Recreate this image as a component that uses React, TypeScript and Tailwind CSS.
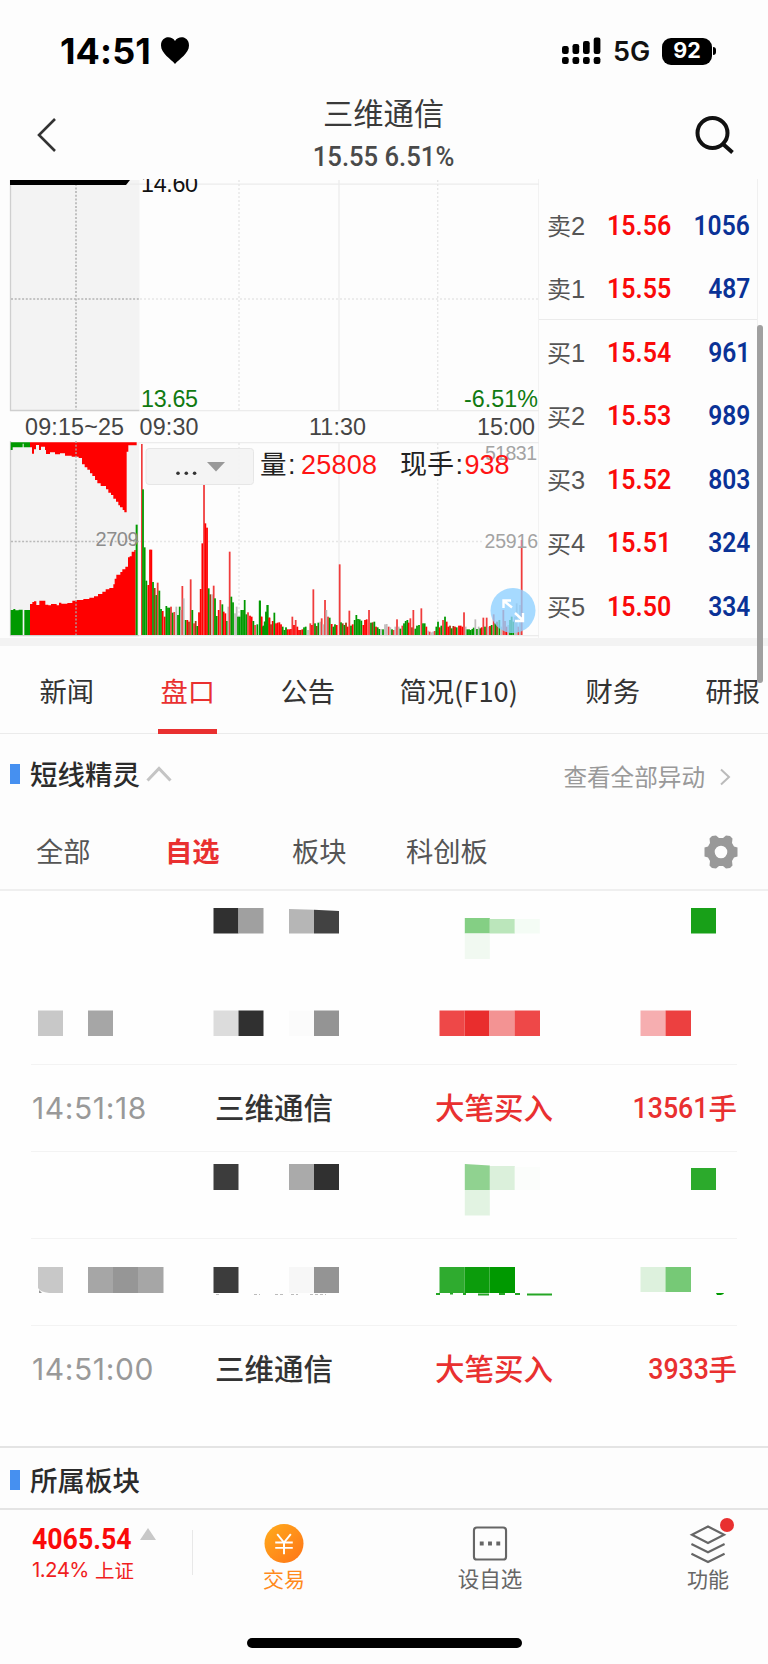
import React from "react";

const orderBook = [
    { label: "卖2", price: "15.56", volume: "1056" },
    { label: "卖1", price: "15.55", volume: "487" },
    { label: "买1", price: "15.54", volume: "961" },
    { label: "买2", price: "15.53", volume: "989" },
    { label: "买3", price: "15.52", volume: "803" },
    { label: "买4", price: "15.51", volume: "324" },
    { label: "买5", price: "15.50", volume: "334" },
];

const tabs = [
    { label: "新闻", width: "w-[121px]" },
    { label: "盘口", width: "w-[120px]" },
    { label: "公告", width: "w-[119px]" },
    { label: "简况(F10)", width: "w-[186px]" },
    { label: "财务", width: "w-[120px]" },
    { label: "研报", width: "w-[62px]" },
];

const filters = [
    { label: "全部", width: "w-[129px]" },
    { label: "自选", width: "w-[127px]" },
    { label: "板块", width: "w-[114px]" },
    { label: "科创板", width: "w-[298px]" },
];

const barColors: Record<string, string> = { r: "#ff0000", g: "#009900", m: "#a03c10", s: "#f03c3c", y: "#c0bcbc" };

// x, top and colour of each bar, in thirds of a pixel; base line is 615
const morningBars =
    "429 178 g,434 352 g,439 452 g,445 465 r,450 359 r,454 359 r,459 456 g,464 474 m,469 495 g,473 458 s,478 482 g,483 537 g,488 543 r,494 560 r,499 528 g,504 533 g,509 533 g,513 530 s,518 548 g,523 546 s,529 530 y,534 555 g,539 530 g,543 540 y,547 468 s,551 505 y,557 570 g,562 570 r,567 575 m,572 448 s,577 540 g,582 580 s,587 573 m,592 588 g,597 547 r,602 477 r,607 340 r,612 165 s,616 280 r,621 293 r,626 475 g,631 493 m,636 493 y,641 467 s,645 505 g,650 558 g,656 540 r,661 510 s,667 523 g,671 545 r,676 550 r,681 573 g,685 530 y,689 365 s,694 500 g,699 517 g,705 550 y,710 530 y,714 560 g,719 560 g,724 540 g,729 540 g,734 510 g,739 553 g,744 547 s,750 557 r,755 560 r,760 573 g,765 585 s,772 583 g,779 512 g,783 560 s,788 590 g,795 575 g,798 545 g,802 525 g,808 563 r";
const afternoonBars =
    "0 512 g,5 560 r,10 587 g,14 575 g,19 548 g,23 525 g,28 563 r,33 583 m,38 573 r,43 548 g,48 580 r,53 578 r,58 577 r,63 583 r,68 590 g,73 600 g,78 592 g,83 598 r,88 598 r,93 597 r,97 560 s,102 585 r,107 570 s,112 590 r,117 600 r,122 600 m,127 598 r,132 592 g,137 590 g,144 600 y,151 580 s,156 585 r,160 478 s,165 580 g,170 588 m,175 578 g,181 575 y,185 565 s,190 583 y,195 510 s,199 540 y,204 560 s,209 563 g,215 582 r,220 590 g,225 583 g,230 585 r,239 403 s,243 577 g,248 580 m,253 585 g,258 578 m,263 590 r,268 542 s,273 587 g,278 583 r,284 570 g,289 555 g,294 567 g,299 568 g,304 572 g,310 585 r,315 570 r,320 568 r,327 540 s,333 578 g,338 577 m,343 575 g,348 590 r,353 592 g,358 597 g,363 597 y,369 598 g,375 583 y,380 582 y,386 590 s,391 592 y,396 598 g,401 600 s,406 590 y,411 568 s,416 590 y,421 596 g,427 587 s,432 580 g,437 573 g,442 570 g,446 578 r,451 565 s,456 592 m,460 540 s,466 596 g,471 587 g,477 585 g,484 535 s,489 580 g,494 580 g,499 590 r,504 602 y,509 605 s,514 607 y,519 605 y,524 603 s,529 590 g,534 575 g,539 592 r,544 587 g,549 570 s,555 560 g,560 575 r,565 590 r,570 587 m,575 595 g,580 588 m,585 590 r,590 592 g,597 587 r,602 587 r,607 590 r,612 547 s,617 590 y,622 598 g,627 598 g,632 600 g,637 597 g,641 593 g,646 568 y,651 597 g,656 590 y,661 595 g,665 592 r,670 563 s,675 590 g,680 563 s,685 590 y,690 588 r,695 585 g,701 553 s,706 580 g,711 575 m,718 570 g,724 590 y,730 540 s,735 573 s,740 590 r,745 585 y,750 570 g,755 560 g,760 575 g,765 560 y,770 520 y,775 590 s,780 525 y,785 330 s";

function Bars({ data }: { data: string }) {
    return (
        <>
            {data.split(",").map((bar, i) => {
                const [x, top, color] = bar.split(" ");
                return <rect key={i} x={Number(x) - 2.6} y={top} width="5.3" height={615 - Number(top)} fill={barColors[color]} />;
            })}
        </>
    );
}

function Chart() {
    return (
        <svg className="block shrink-0" width="539" height="459" viewBox="0 179 539 459" fontFamily="'Liberation Sans', 'Noto Sans CJK SC', sans-serif">
            {/* price pane */}
            <rect x="10" y="180" width="129.5" height="230.5" fill="#f3f3f3" />
            <path d="M10.5 180V410.5H139.5" fill="none" stroke="#cfcfcf" strokeWidth="1.3" />
            <path d="M130 184.2H539M139.5 410.7H539M339 180V410M539 179V638" stroke="#ececec" strokeWidth="1.2" />
            <path d="M239 180V410M437.7 180V410M140 299H538" stroke="#e6e6e6" strokeWidth="1.4" strokeDasharray="2 2" />
            <path d="M76 180V410M11 299H139" stroke="#b4b4b4" strokeWidth="1.6" strokeDasharray="2 1.7" />
            <path d="M10 180H130L126 185H10Z" fill="#000" />
            <text x="141" y="192.3" fontSize="23.3" fill="#111" textLength="57">14.60</text>
            <text x="141" y="407.3" fontSize="23.3" fill="#107a10" textLength="57">13.65</text>
            <text x="464" y="407.3" fontSize="23.3" fill="#107a10" textLength="74">-6.51%</text>
            <g fontSize="23.3" fill="#444">
                <text x="25" y="435" textLength="99">09:15~25</text>
                <text x="139.5" y="435" textLength="59">09:30</text>
                <text x="309" y="435" textLength="57">11:30</text>
                <text x="477" y="435" textLength="58">15:00</text>
            </g>

            {/* volume pane */}
            <rect x="10" y="442" width="129" height="194" fill="#f3f3f3" />
            <path d="M10.5 441V635.7H139" fill="none" stroke="#cfcfcf" strokeWidth="1.3" />
            <path d="M139 442.7H539M139 635.7H539M339 443V635" stroke="#ececec" strokeWidth="1.2" />
            <path d="M239 443V635M437.7 443V635M140 541.5H484" stroke="#e6e6e6" strokeWidth="1.4" strokeDasharray="2 2" />
            <g transform="translate(0 430) scale(0.33333)">
                <path d="M32 37H90V52H71V41H68V52H38V60H32Z" fill="#009900" />
                <path d="M90 37H410V46H385V65H380V247H373V240H368V232H360V226H355V215H348V206H340V195H333V188H325V178H318V168H302V160H292V150H285V138H277V130H270V119H262V112H254V103H246V84H236V80H215V77H195V70H180V73H165V67H150V72H138V60H135V50H123V60H117V45H108V58H102V71H96V52H90Z" fill="#ff0000" />
                <path d="M32 540H40V537H46V541H56V539H68V615H32ZM73 540H90V615H73Z" fill="#009900" />
                <path d="M90 522H97V516H102V514H109V525H118V512H136V524H145V526H153V522H170V526H177V518H184V521H202V519H217V512H230V510H250V507H268V503H282V499H294V492H307V485H317V478H328V474H340V463H344V446H349V434H361V426H367V418H376V410H384V382H389V379H395V365H403V360H407V615H90Z" fill="#ff0000" />
                <rect x="407" y="284" width="6" height="331" fill="#009900" />
                <rect x="423" y="42" width="5" height="573" fill="#f03c3c" />
                <Bars data={morningBars} />
                <g transform="translate(780 0)">
                    <Bars data={afternoonBars} />
                </g>
            </g>
            <path d="M76 441V635M11 541.5H139" stroke="#aaa" strokeOpacity="0.8" strokeWidth="1.6" strokeDasharray="2 1.7" />
            <text x="95.5" y="545.7" fontSize="20" fill="#8c8c8c" textLength="43">2709</text>
            <text x="485" y="460.3" fontSize="19.5" fill="#a3a3a3" textLength="52">51831</text>
            <text x="484.5" y="548.3" fontSize="19.5" fill="#a3a3a3" textLength="53.5">25916</text>

            {/* indicator picker */}
            <rect x="146" y="448.5" width="107.5" height="36" rx="3" fill="#f3f3f3" fillOpacity="0.95" stroke="#e6e6e6" />
            <g fill="#333">
                <circle cx="178" cy="473.2" r="1.8" />
                <circle cx="186.300" cy="473.2" r="1.8" />
                <circle cx="194.600" cy="473.2" r="1.8" />
            </g>
            <path d="M207 462H225L216 471.5Z" fill="#999" />
            <g fontSize="27">
                <text x="260" y="474" fill="#222" fontSize="26.5">量</text>
                <text x="288" y="474" fill="#222">:</text>
                <text x="301" y="474" fill="#ff1414" textLength="76">25808</text>
                <text x="400" y="474" fill="#222" fontSize="27">现手</text>
                <text x="455.5" y="474" fill="#222">:</text>
                <text x="464.5" y="474" fill="#ff1414" textLength="45">938</text>
            </g>

            {/* expand handle */}
            <circle cx="513" cy="610.5" r="22.5" fill="#8dcfff" fillOpacity="0.78" />
            <path d="M504 601L512 607.500M515 613L522 619.500M503.500 608V600.500H511M515 621H523V613" fill="none" stroke="#fff" strokeWidth="2.4" />
        </svg>
    );
}

// x, y, width, height, fill
type Cell = [number, number, number, number, string];

function MosaicRow({ cells, children }: { cells: Cell[]; children?: React.ReactNode }) {
    return (
        <svg className="block" width="768" height="86" viewBox="0 0 768 86">
            {cells.map(([x, y, w, h, fill], i) => (
                <rect key={i} x={x} y={y} width={w} height={h} fill={fill} />
            ))}
            {children}
        </svg>
    );
}

function Divider() {
    return <div className="mx-[31px] h-px bg-[#f3f3f3]" />;
}

function TradeRow({ time, amount }: { time: string; amount: string }) {
    return (
        <div className="flex h-[86px] items-center pb-[2px] pl-[32px] pr-[31px] text-[29.5px] leading-none">
            <span className="w-[183px] pt-[2px] font-['Inter'] text-[30px] tracking-[0.6px] text-[#999]">{time}</span>
            <span className="w-[220px] font-medium text-[#333]">三维通信</span>
            <span className="font-medium text-[#e93030]">大笔买入</span>
            <span className="ml-auto flex items-center font-medium text-[#e93030]">
                <span className="origin-right scale-x-[0.92] pt-[2px] font-['Roboto'] text-[29px]">{amount}</span>
                <span className="text-[28.5px]">手</span>
            </span>
        </div>
    );
}

function SectionTitle({ title }: { title: string }) {
    return (
        <>
            <span className="h-[20px] w-[10px] bg-[#4690f0]" />
            <span className="ml-[10px] text-[27.5px] font-medium leading-none text-[#2b2b2b]">{title}</span>
        </>
    );
}

export default function App() {
    return (
        <div className="relative flex h-[1664px] w-[768px] flex-col overflow-hidden bg-[#fdfdfd] font-['Noto_Sans_CJK_SC',sans-serif]">
            {/* Status bar */}
            <div className="flex h-[90px] shrink-0 items-center pl-[60px] pt-[12px]">
                <span className="w-[101px] font-['Inter'] text-[36px] font-bold leading-none tracking-[0.1px] text-black">14:51</span>
                <svg width="28" height="28" viewBox="0 0 28 28">
                    <path d="M14 27C10 22 0 16.500 0 8.500C0 -1 10.500 -2 14 4C17.500 -2 28 -1 28 8.500C28 16.500 18 22 14 27Z" fill="#000" />
                </svg>
                <svg className="ml-[373px]" width="40" height="28" viewBox="0 0 40 28">
                    <rect x="0" y="9" width="6.700" height="8" rx="2.200" />
                    <rect x="10.500" y="7" width="6.700" height="10" rx="2.200" />
                    <rect x="21" y="4" width="6.700" height="13" rx="2.200" />
                    <rect x="31.700" y="0.500" width="6.700" height="16.500" rx="2.200" />
                    <rect x="0" y="20" width="6.700" height="7" rx="2.200" />
                    <rect x="10.500" y="20" width="6.700" height="7" rx="2.200" />
                    <rect x="21" y="20" width="6.700" height="7" rx="2.200" />
                    <rect x="31.700" y="20" width="6.700" height="7" rx="2.200" />
                </svg>
                <span className="ml-[11px] w-[49px] font-['Inter'] text-[27px] font-semibold leading-none text-[#111]">5G</span>
                <span className="flex h-[27px] w-[50px] items-center justify-center rounded-[9px] bg-black font-['Inter'] text-[21.5px] font-bold leading-none text-white">92</span>
                <span className="ml-[1px] h-[8px] w-[3px] rounded-r-full bg-black" />
            </div>

            {/* Nav bar */}
            <div className="flex h-[89px] shrink-0 items-start justify-between pl-[35px] pr-[33px]">
                <svg className="mt-[26px]" width="24" height="38" viewBox="0 0 24 38">
                    <path d="M20 3L4 19L20 35" fill="none" stroke="#333" strokeWidth="2.600" />
                </svg>
                <div className="ml-[13px] flex flex-col items-center">
                    <span className="mt-[6px] text-[30.3px] leading-[32px] text-[#3a3a3a]">三维通信</span>
                    <span className="mt-[15px] scale-x-[0.95] whitespace-pre font-['Roboto'] text-[27px] font-medium leading-[28px] text-[#4a4a4a]">15.55 6.51%</span>
                </div>
                <svg className="mt-[24px]" width="40" height="40" viewBox="0 0 40 40" fill="none" stroke="#111" strokeWidth="4">
                    <circle cx="17.500" cy="19" r="15" />
                    <path d="M28 30L37.500 38.500" />
                </svg>
            </div>

            {/* Chart and order book */}
            <div className="flex h-[459px] shrink-0">
                <Chart />
                <div className="flex w-[219px] flex-col border-r border-[#f0f0f0] pt-[14px]">
                    {orderBook.map((row, i) => (
                        <div
                            key={row.label}
                            className={`flex h-[63.5px] items-center pl-[8px] pr-[7px] pt-[3px] leading-none ${i === 1 ? "border-b border-[#ebebeb]" : ""}`}
                        >
                            <span className="flex w-[60px] items-center text-[#555]">
                                <span className="pb-[2px] text-[24px]">{row.label[0]}</span>
                                <span className="font-['Liberation_Sans'] text-[25.5px]">{row.label[1]}</span>
                            </span>
                            <span className="origin-left scale-x-[0.925] font-['Roboto'] text-[27px] font-semibold text-[#fa0a0a]">{row.price}</span>
                            <span className="ml-auto origin-right scale-x-[0.91] font-['Roboto'] text-[27px] font-semibold text-[#0a3296]">{row.volume}</span>
                        </div>
                    ))}
                </div>
            </div>
            <div className="h-[8px] shrink-0 bg-[#f3f3f3]" />

            {/* Tabs */}
            <div className="flex h-[88px] shrink-0 border-b border-[#ebebeb] pl-[39.5px] text-[27.3px] leading-[88px] text-[#333]">
                {tabs.map((tab, i) => (
                    <div key={tab.label} className={`relative shrink-0 whitespace-nowrap ${tab.width} ${i === 1 ? "text-[#e93030]" : ""}`}>
                        {tab.label}
                        {i === 1 && <span className="absolute -left-[3px] top-[83px] h-[5px] w-[59px] bg-[#e93030]" />}
                    </div>
                ))}
            </div>

            {/* Short-term alerts */}
            <div className="flex h-[79px] shrink-0 items-center pl-[10px]">
                <SectionTitle title="短线精灵" />
                <svg className="ml-[6px]" width="26" height="16" viewBox="0 0 26 16">
                    <path d="M1.500 14.500L13 2.500L24.500 14.500" fill="none" stroke="#c4c4c4" strokeWidth="3" />
                </svg>
                <span className="ml-auto mt-[6px] text-[23.6px] leading-none text-[#999]">查看全部异动</span>
                <svg className="ml-[14px] mr-[37px] mt-[6px]" width="12" height="18" viewBox="0 0 12 18">
                    <path d="M2 1.500L10 9L2 16.500" fill="none" stroke="#bbb" strokeWidth="2" />
                </svg>
            </div>
            <div className="flex h-[78px] shrink-0 items-center border-b-2 border-[#efefef] pl-[36px] text-[27.3px] leading-none text-[#555]">
                {filters.map((filter, i) => (
                    <span key={filter.label} className={`shrink-0 ${filter.width} ${i === 1 ? "font-bold text-[#e93030]" : ""}`}>
                        {filter.label}
                    </span>
                ))}
                <svg className="mt-[2px]" width="34" height="34" viewBox="-17 -17 34 34" fill="#999">
                    <path
                        fillRule="evenodd"
                        d="M-9 -16L-5 -16.500L-2 -14H2L5 -16.500L9 -16L11.500 -13.500L11 -9L13 -5.500L16.500 -4.500V4.500L13 5.500L11 9L11.500 13.500L9 16L5 16.500L2 14H-2L-5 16.500L-9 16L-11.500 13.500L-11 9L-13 5.500L-16.500 4.500V-4.500L-13 -5.500L-11 -9L-11.500 -13.500ZM6.300 0A6.300 6.300 0 1 0 -6.300 0A6.300 6.300 0 1 0 6.300 0Z"
                    />
                </svg>
            </div>

            <div className="h-[555px] shrink-0 bg-[#fefefe]">
                <MosaicRow
                    cells={[
                        [213.500, 17, 25, 25.500, "#303030"],
                        [238.500, 17, 25, 25.500, "#a0a0a0"],
                        [464.800, 27, 25, 15.500, "#84cf84"],
                        [489.800, 28, 25, 14.500, "#bbe6bb"],
                        [514.800, 28, 25, 14.500, "#f4fcf5"],
                        [464.800, 42.500, 25, 25.500, "#f1f9f1"],
                        [691, 17, 25, 25.500, "#18a018"],
                    ]}
                >
                    <path d="M289 18L314 18.700V42.500H289Z" fill="#b6b6b6" />
                    <path d="M314 18.700L339 20V42.500H314Z" fill="#424242" />
                </MosaicRow>
                <div className="h-px" />
                <MosaicRow
                    cells={[
                        [38, 32.500, 25, 25.500, "#c8c8c8"],
                        [88, 32.500, 25, 25.500, "#a6a6a6"],
                        [213.500, 32.500, 25, 25.500, "#dcdcdc"],
                        [238.500, 32.500, 25, 25.500, "#303030"],
                        [289, 32.500, 25, 25.500, "#fbfbfb"],
                        [314, 32.500, 25, 25.500, "#949494"],
                        [439.500, 32.500, 25, 25.500, "#ee4848"],
                        [464.500, 32.500, 25, 25.500, "#e92d2d"],
                        [489.500, 32.500, 25, 25.500, "#f39393"],
                        [514.500, 32.500, 25.500, 25.500, "#ee4848"],
                        [640.500, 32.500, 25, 25.500, "#f6aeb0"],
                        [665.500, 32.500, 25.500, 25.500, "#ec4040"],
                    ]}
                />
                <Divider />
                <TradeRow time="14:51:18" amount="13561" />
                <Divider />
                <MosaicRow
                    cells={[
                        [213.500, 12, 25, 26, "#3c3c3c"],
                        [289, 12, 25, 26, "#aaaaaa"],
                        [314, 12, 25, 26, "#303030"],
                        [489.800, 14, 25, 24, "#dbf0db"],
                        [514.800, 15, 25, 23, "#fbfdfb"],
                        [464.800, 38, 25, 25.500, "#e2f3e2"],
                        [691, 16, 25, 22, "#2caa2c"],
                    ]}
                >
                    <path d="M464.800 12L489.800 13.500V38H464.800Z" fill="#90d290" />
                </MosaicRow>
                <Divider />
                <MosaicRow
                    cells={[
                        [88, 28, 25, 26, "#a6a6a6"],
                        [113, 28, 25, 26, "#969696"],
                        [138, 28, 25.500, 26, "#a6a6a6"],
                        [213.500, 28, 25, 26, "#3c3c3c"],
                        [289, 28, 25, 26, "#f7f7f7"],
                        [314, 28, 25, 26, "#949494"],
                        [439.500, 28, 25, 26, "#2fab2f"],
                        [464.500, 28, 25, 26, "#0c9c0c"],
                        [489.500, 28, 25.500, 26, "#009900"],
                        [640.500, 28, 25, 25, "#ddf1dd"],
                        [665.500, 28, 25.500, 25, "#76c976"],
                    ]}
                >
                    <path d="M38 28H63V54H49Q40 53 38 49Z" fill="#c8c8c8" />
                    <path d="M39 51l3 3h-3z" fill="#999" />
                    <path d="M436 55h4M450 54.700h3M463 55h3M478 55.500h11M499 55h6M515 55h5M527 55.500h25" stroke="#25a625" strokeWidth="1.800" />
                    <path d="M716 54h8q-1 2.500-7 2z" fill="#009900" />
                    <path d="M216 55.500h3M254 55.500h6M275 55.500h10M291 55.500h7M310 55.500h16" stroke="#bbb" strokeWidth="1.200" strokeDasharray="3 2" />
                </MosaicRow>
                <Divider />
                <TradeRow time="14:51:00" amount="3933" />
            </div>

            {/* Sector */}
            <div className="flex h-[64px] shrink-0 items-center border-y-2 border-[#e4e4e4] pl-[10px] pt-[4px]">
                <SectionTitle title="所属板块" />
            </div>

            {/* Bottom bar */}
            <div className="flex h-[80px] shrink-0">
                <div className="flex w-[192px] flex-col pl-[32px] pt-[13px]">
                    <div className="flex items-start">
                        <span className="w-[97px] origin-left scale-x-[0.92] font-['Roboto'] text-[29px] font-bold leading-[32px] text-[#fa0a0a]">4065.54</span>
                        <svg className="ml-[11px] mt-[5px]" width="16" height="12" viewBox="0 0 16 12">
                            <path d="M8 0L16 12H0Z" fill="#c8c8c8" />
                        </svg>
                    </div>
                    <div className="mt-[3px] flex items-center leading-[24px] text-[#f01e1e]">
                        <span className="w-[63px] font-['Inter'] text-[20.5px] tracking-[-0.6px]">1.24%</span>
                        <span className="text-[19.5px]">上证</span>
                    </div>
                </div>
                <div className="mt-[20px] h-[45px] w-px bg-[#e8e8e8]" />
                <div className="flex w-[182px] flex-col items-center pt-[14px] text-[#ff8a1c]">
                    <svg width="40" height="40" viewBox="0 0 40 40">
                        <defs>
                            <linearGradient id="coin" x1="0" y1="0" x2="1" y2="1">
                                <stop offset="0" stopColor="#ffac1c" />
                                <stop offset="1" stopColor="#ff7418" />
                            </linearGradient>
                        </defs>
                        <circle cx="20" cy="20" r="20" fill="url(#coin)" />
                        <path d="M13 10.500L20 19L27 10.500M20 19V31M11 19H29M11 24.500H29" fill="none" stroke="#fff" strokeWidth="2" />
                    </svg>
                    <span className="mt-[3px] text-[21px] leading-[24px]">交易</span>
                </div>
                <div className="ml-[34px] flex w-[162px] flex-col items-center pt-[16px] text-[#666]">
                    <svg width="36" height="36" viewBox="0 0 36 36">
                        <rect x="1.500" y="1.500" width="33" height="33" rx="3" fill="none" stroke="#666" strokeWidth="2.200" />
                        <path d="M7.500 16h4v4h-4zM16 16h4v4h-4zM24.500 16h4v4h-4z" fill="#666" />
                    </svg>
                    <span className="mt-[5px] text-[21.5px] leading-[24px]">设自选</span>
                </div>
                <div className="relative ml-[85px] flex w-[104px] flex-col items-center pt-[15px] text-[#666]">
                    <svg width="38" height="40" viewBox="0 0 38 40" fill="none" stroke="#666" strokeWidth="2.200">
                        <path d="M19 1.500L35.500 10L19 18.500L2.500 10Z M2 19.500L19 28L36 19.500M2 29.500L19 38L36 29.500" />
                    </svg>
                    <span className="absolute left-[64px] top-[8px] size-[14px] rounded-full bg-[#e93030]" />
                    <span className="mt-[2px] text-[21px] leading-[24px]">功能</span>
                </div>
            </div>
            <div className="mx-auto mt-[48px] h-[10px] w-[275px] shrink-0 rounded-full bg-black" />

            {/* Scroll indicator floats over the page */}
            <div className="absolute left-[757px] top-[325px] h-[358px] w-[6px] rounded-full bg-[#a0a0a0]" />
        </div>
    );
}
